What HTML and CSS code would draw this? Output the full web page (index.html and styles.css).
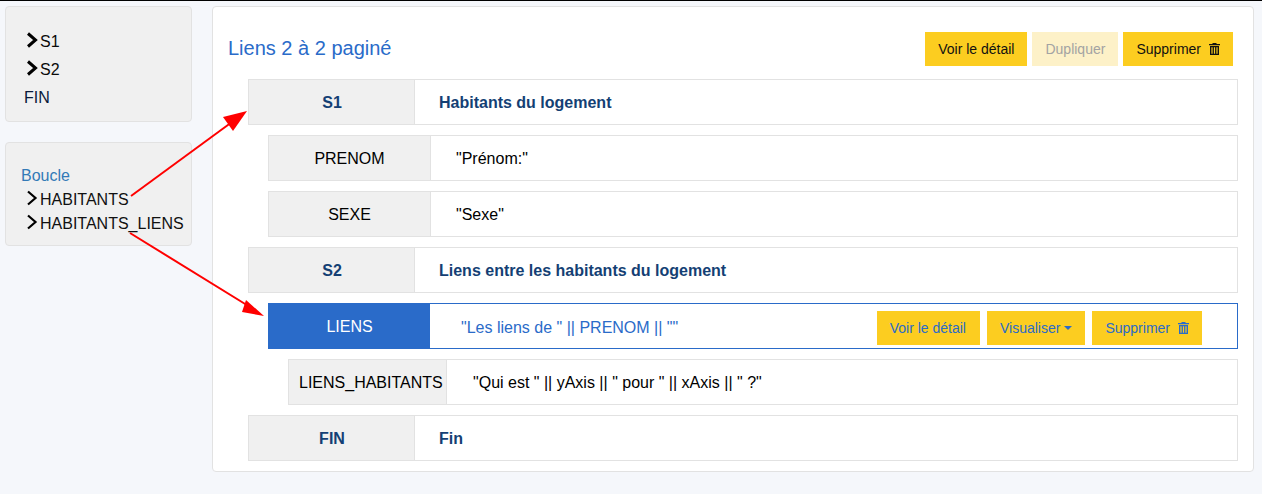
FILE: index.html
```html
<!DOCTYPE html>
<html lang="fr">
<head>
<meta charset="utf-8">
<title>Liens 2 à 2 paginé</title>
<link rel="stylesheet" href="styles.css">
</head>
<body>
<div class="page">
  <aside class="side">
    <section class="panel panel-seq">
      <div class="seq"><svg class="chev" viewBox="0 0 12 16"><path d="M2 1.5 L9.5 8 L2 14.5"/></svg>S1</div>
      <div class="seq"><svg class="chev" viewBox="0 0 12 16"><path d="M2 1.5 L9.5 8 L2 14.5"/></svg>S2</div>
      <div class="seq seq-end">FIN</div>
    </section>
    <section class="panel panel-loop">
      <div class="loop-title">Boucle</div>
      <div class="loop"><svg class="chev" viewBox="0 0 12 16"><path d="M2 1.5 L9.5 8 L2 14.5"/></svg>HABITANTS</div>
      <div class="loop"><svg class="chev" viewBox="0 0 12 16"><path d="M2 1.5 L9.5 8 L2 14.5"/></svg>HABITANTS_LIENS</div>
    </section>
  </aside>
  <main class="card">
    <header class="head">
      <h1>Liens 2 à 2 paginé</h1>
      <div class="actions">
        <button class="btn">Voir le détail</button>
        <button class="btn btn-off">Dupliquer</button>
        <button class="btn">Supprimer<svg class="trash" viewBox="0 0 11 12"><path d="M3.5 1V0h4v1H11v1.2H0V1zM1 3h9v9H1zM2.4 4.2v6.6h1.2V4.2zM4.9 4.2v6.6h1.2V4.2zM7.4 4.2v6.6h1.2V4.2z" fill-rule="evenodd"/></svg></button>
      </div>
    </header>
    <div class="rows">
      <div class="row lvl0 strong"><div class="key">S1</div><div class="val">Habitants du logement</div></div>
      <div class="row lvl1"><div class="key">PRENOM</div><div class="val">"Prénom:"</div></div>
      <div class="row lvl1"><div class="key">SEXE</div><div class="val">"Sexe"</div></div>
      <div class="row lvl0 strong"><div class="key">S2</div><div class="val">Liens entre les habitants du logement</div></div>
      <div class="row lvl1 active">
        <div class="key">LIENS</div>
        <div class="val">"Les liens de " || PRENOM || ""</div>
        <div class="row-actions">
          <button class="btn">Voir le détail</button>
          <button class="btn">Visualiser<span class="caret"></span></button>
          <button class="btn">Supprimer<svg class="trash" viewBox="0 0 11 12"><path d="M3.5 1V0h4v1H11v1.2H0V1zM1 3h9v9H1zM2.4 4.2v6.6h1.2V4.2zM4.9 4.2v6.6h1.2V4.2zM7.4 4.2v6.6h1.2V4.2z" fill-rule="evenodd"/></svg></button>
        </div>
      </div>
      <div class="row lvl2"><div class="key">LIENS_HABITANTS</div><div class="val">"Qui est " || yAxis || " pour " || xAxis || " ?"</div></div>
      <div class="row lvl0 strong"><div class="key">FIN</div><div class="val">Fin</div></div>
    </div>
  </main>
</div>
<svg class="arrows" viewBox="0 0 1262 494">
  <path class="arrow-line" d="M131 196 L232 122"/>
  <path class="arrow-head" d="M247 111 L223 117 L233 131 Z"/>
  <path class="arrow-line" d="M130 233 L250 307"/>
  <path class="arrow-head" d="M264 316 L246 300 L242 312 Z"/>
</svg>
</body>
</html>
```
FILE: styles.css
```css
* { box-sizing: border-box; }
html, body { margin: 0; height: 494px; overflow: hidden; }
body {
  background: #f5f7fb;
  border-top: 1px solid #000;
  font-family: "Liberation Sans", Arial, sans-serif;
  font-size: 16px;
  color: #000;
  position: relative;
}
.page { display: flex; align-items: flex-start; padding: 5px 8px 0 5px; gap: 20px; }
.side { width: 187px; display: flex; flex-direction: column; gap: 20px; flex: none; }
.panel { background: #f0f0f0; border: 1px solid #e2e2e2; border-radius: 4px; }
.panel-seq { height: 116px; padding: 21px 0 0 18px; }
.panel-loop { height: 104px; padding: 23px 0 0 15px; }
.seq { height: 28px; line-height: 28px; display: flex; align-items: center; color: #0a0a0a; }
.seq-end { color: #0a1a3a; }
.chev { width: 12px; height: 16px; flex: none; margin-top: -5px; }
.seq .chev { margin-left: 2px; margin-right: 2px; }
.loop .chev { margin-left: 5px; margin-right: 2px; }
.chev path { fill: none; stroke: #000; stroke-width: 2.2; }
.seq .chev path { stroke-width: 3; }
.loop-title { color: #337ab7; line-height: 20px; height: 20px; margin-bottom: 2px; }
.loop { height: 24px; line-height: 24px; display: flex; align-items: center; color: #111; white-space: nowrap; }
.card {
  flex: 1;
  height: 466px;
  background: #fff;
  border: 1px solid #e2e2e2;
  border-radius: 4px;
  padding: 25px 15px 0 35px;
}
.head { display: flex; justify-content: space-between; align-items: center; height: 34px; margin-left: -20px; padding-right: 5px; margin-bottom: 13px; }
h1 { margin: 0 0 2px; font-size: 20px; font-weight: 400; color: #2a6bc9; line-height: 34px; }
.actions, .row-actions { display: flex; gap: 5px; }
.btn {
  font: 14px "Liberation Sans", Arial, sans-serif;
  height: 34px;
  padding: 0 13px;
  border: 0;
  background: #fccd20;
  color: #111;
  display: inline-flex;
  align-items: center;
  white-space: nowrap;
}
.btn-off { background: #fdf1c8; color: #a3a3a3; }
.trash { width: 11px; height: 12px; margin-left: 8px; fill: currentColor; }
.rows { display: flex; flex-direction: column; gap: 10px; }
.row { display: flex; height: 46px; border: 1px solid #e2e2e2; background: #fff; align-items: stretch; }
.key { background: #f0f0f0; border-right: 1px solid #e2e2e2; padding-top: 2px; display: flex; align-items: center; justify-content: center; flex: none; }
.val { display: flex; align-items: center; padding: 2px 0 0 25px; white-space: nowrap; }
.lvl0 .key { width: 166px; padding-left: 1px; }
.lvl1 { margin-left: 20px; }
.lvl1 .key { width: 162px; }
.lvl2 { margin-left: 40px; }
.lvl2 .key { width: 158px; justify-content: flex-start; padding-left: 10px; }
.lvl2 .val { padding-left: 26px; }
.strong { color: #143f74; font-weight: 700; }
.strong .val { padding-left: 24px; }
.active { border-color: #2a6bc9; color: #2a6bc9; }
.lvl1.active .key { width: 161px; background: #2a6bc9; color: #fff; border-right: 0; }
.active .val { padding: 4px 0 0 31px; }
.row-actions { margin-left: auto; margin-right: 35px; padding-top: 4px; align-items: center; gap: 7px; }
.active .btn { color: #2a6bc9; }
.row-actions .btn:first-child { padding-right: 14px; }
.caret { width: 0; height: 0; margin-left: 4px; border: 4px solid transparent; border-top-color: currentColor; border-bottom: 0; }
.arrows { position: absolute; left: 0; top: -1px; width: 1262px; height: 494px; pointer-events: none; }
.arrow-line { fill: none; stroke: #f00; stroke-width: 2; }
.arrow-head { fill: #f00; }
```
